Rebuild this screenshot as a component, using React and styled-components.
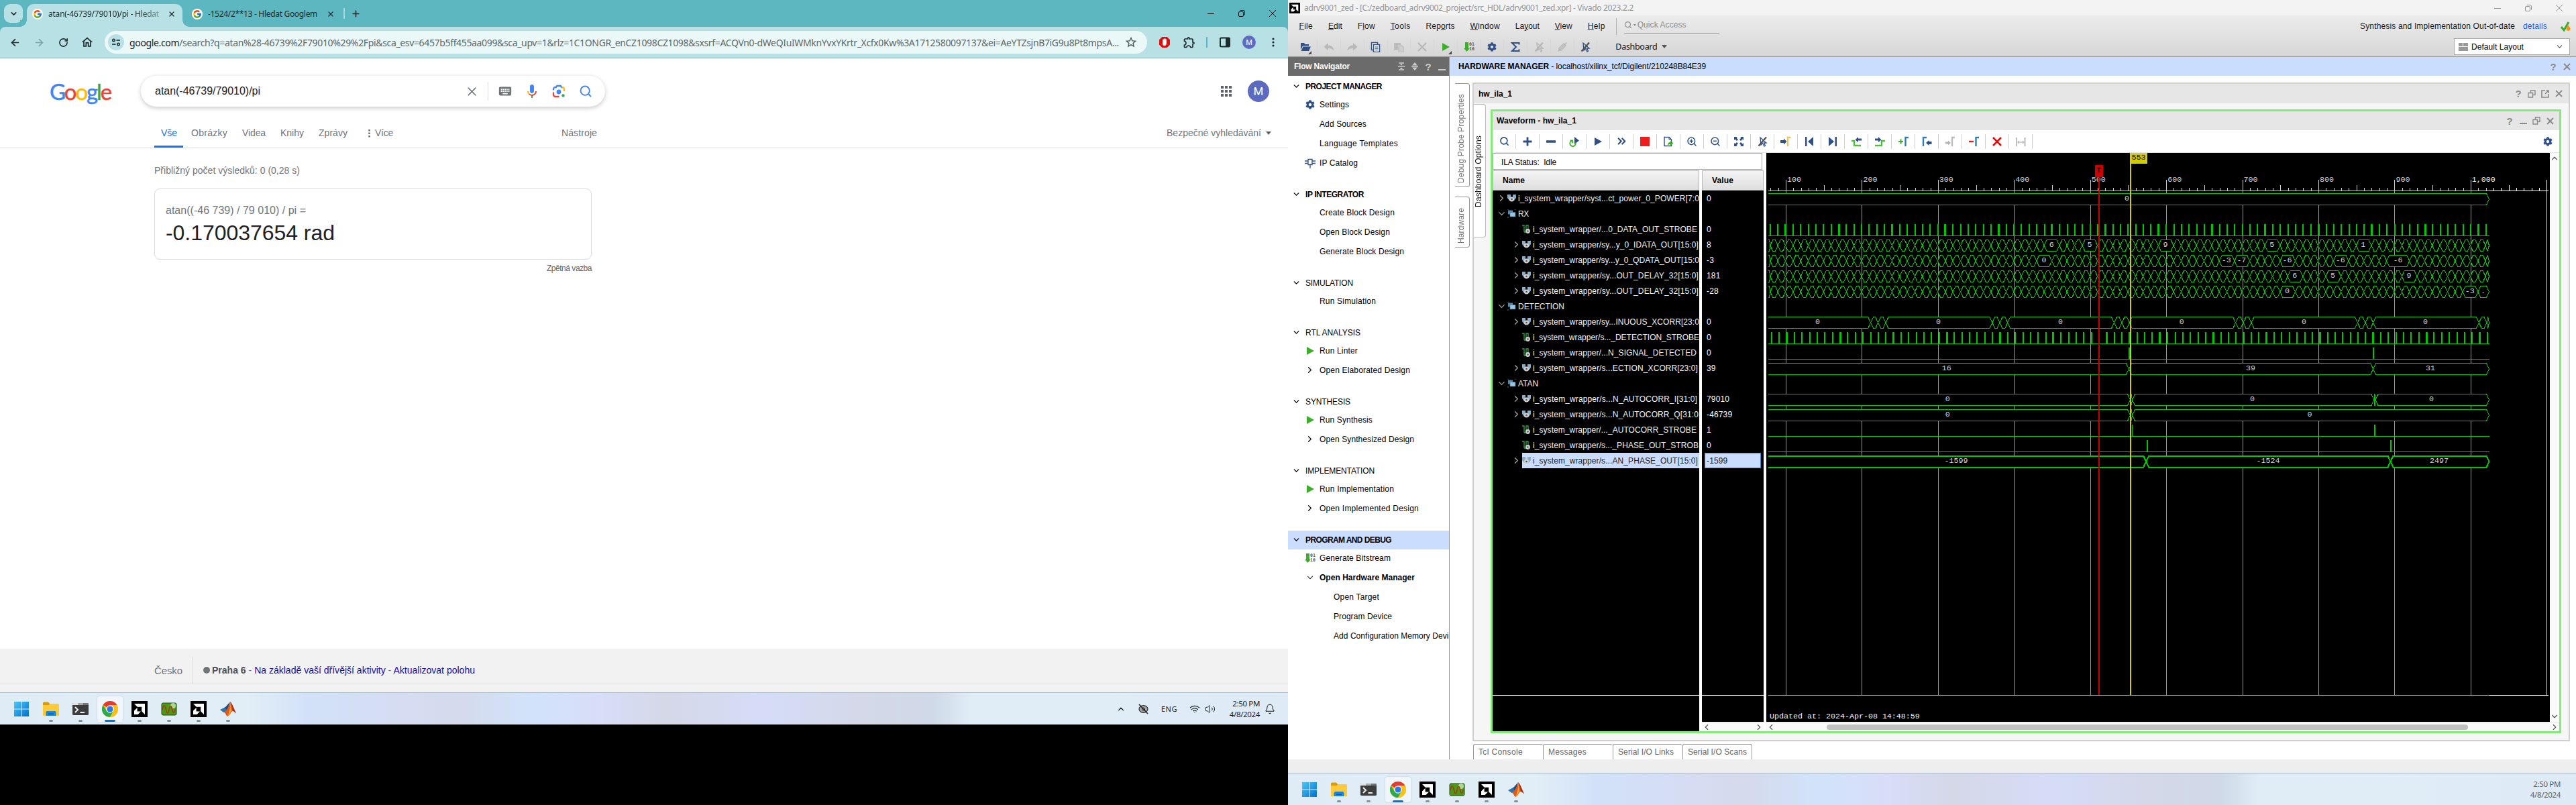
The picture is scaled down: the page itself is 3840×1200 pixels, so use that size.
import React, { useLayoutEffect, useRef, useState } from "react";
import styled, { createGlobalStyle, css } from "styled-components";
import {
  ChevronDown, ChevronUp, ChevronLeft, ChevronRight, ArrowLeft, ArrowRight, RotateCw, X, Plus,
  Search, Bell, Volume2, Wifi, ZoomIn, ZoomOut, ChevronsRight,
} from "lucide-react";
import { FcGoogle } from "react-icons/fc";
import { FaCog } from "react-icons/fa";
import { MdKeyboard, MdOutlineExtension, MdStarBorder, MdOutlineHome, MdApps } from "react-icons/md";

const Global = createGlobalStyle`
  * { box-sizing: border-box; }
  html, body { margin: 0; padding: 0; background: #000; }
  body { font-family: "Liberation Sans", Arial, sans-serif; font-size: 12px; color: #000; overflow: hidden; }
  svg { display: block; flex: none; }
`;

const ui = `"Noto Sans", "Open Sans", sans-serif`;
const arial = `"Liberation Sans", Arial, sans-serif`;
const navy = "#2f4f87";

/* ---------- text set to a given advance ---------- */

const FitText = styled.span`
  white-space: pre;
  flex: none;
  display: inline-block;
  ${(p) => p.$vertical && css`writing-mode: vertical-rl; transform: rotate(180deg);`}
`;

function Fit({ w, vertical, children, className }) {
  const ref = useRef(null);
  const [spacing, setSpacing] = useState(0);
  useLayoutEffect(() => {
    const el = ref.current;
    const box = el.getBoundingClientRect();
    const size = vertical ? box.height : box.width;
    setSpacing((w - size) / el.textContent.length);
  }, [w, vertical]);
  return (
    <FitText ref={ref} $vertical={vertical} className={className} style={{ letterSpacing: spacing }}>
      {children}
    </FitText>
  );
}

/* ---------- shared layout ---------- */

const Desktop = styled.div`
  display: grid;
  grid-template-columns: 1920px 1920px;
  width: 3840px;
  height: 1200px;
  background: #000;
  overflow: hidden;
`;
const Monitor = styled.section`
  display: flex;
  flex-direction: column;
  width: 1920px;
  height: ${(p) => p.$h}px;
  overflow: hidden;
`;
const Spacer = styled.div`flex: 1;`;
const Cell = styled.div`
  width: ${(p) => p.$w}px;
  height: 100%;
  flex: none;
  display: flex;
  align-items: center;
  justify-content: center;
  color: ${(p) => p.$c || "inherit"};
`;
const Rule = styled.div`
  width: ${(p) => p.$w || 1}px;
  height: ${(p) => p.$h}px;
  flex: none;
  background: ${(p) => p.$c};
`;

/* ---------- window controls ---------- */

const WinButtons = styled.div`
  display: flex;
  height: 100%;
  margin-left: auto;
  padding-right: ${(p) => p.$pad || 0}px;
  color: ${(p) => p.$c};
`;
function WindowControls({ pad, color }) {
  const g = { width: 10, height: 10, fill: "none", stroke: "currentColor", strokeWidth: 1 };
  return (
    <WinButtons $pad={pad} $c={color}>
      <Cell $w={46}><svg {...g}><path d="M0 5.5h10" /></svg></Cell>
      <Cell $w={46}><svg {...g}><path d="M.5 4a1.5 1.5 0 0 1 1.500-1.500H6A1.500 1.500 0 0 1 7.500 4v4A1.500 1.500 0 0 1 6 9.500H2A1.500 1.500 0 0 1 .5 8zM2.500.5H7.500a2 2 0 0 1 2 2V7.500" /></svg></Cell>
      <Cell $w={46}><svg {...g}><path d="M0 0l10 10M10 0L0 10" /></svg></Cell>
    </WinButtons>
  );
}

/* ---------- browser ---------- */

const TabStrip = styled.div`
  display: flex;
  align-items: flex-start;
  height: 40px;
  background: #5cb7c1;
  font: 12px ${ui};
  color: #1f2a2c;
`;
const TabSearch = styled.div`
  width: 28px;
  height: 28px;
  margin: 6px 6px 0;
  border-radius: 9px;
  background: #b7e1e4;
  display: flex;
  align-items: center;
  justify-content: center;
`;
const Tab = styled.div`
  position: relative;
  height: 34px;
  margin-top: 6px;
  padding: 0 8px 5px ${(p) => (p.$active ? 8 : 14)}px;
  width: ${(p) => p.$w}px;
  display: flex;
  align-items: center;
  ${(p) => p.$active && css`
    background: #b7e1e4;
    border-radius: 10px 10px 0 0;
    &::before, &::after {
      content: "";
      position: absolute;
      bottom: 0;
      width: 10px;
      height: 10px;
    }
    &::before { left: -10px; background: radial-gradient(circle at 0 0, #5cb7c1 9.5px, #b7e1e4 10px); }
    &::after { right: -10px; background: radial-gradient(circle at 100% 0, #5cb7c1 9.5px, #b7e1e4 10px); }
  `}
`;
const Favicon = styled.div`
  width: 16px;
  height: 16px;
  border-radius: 50%;
  background: #fff;
  display: flex;
  align-items: center;
  justify-content: center;
  margin-right: 8px;
  flex: none;
`;
const TabTitle = styled.div`
  width: ${(p) => p.$w}px;
  overflow: hidden;
  flex: none;
  ${(p) => p.$fade && css`mask-image: linear-gradient(90deg, #000 82%, rgba(0, 0, 0, 0.25));`}
`;
const StripEnd = styled.div`
  display: flex;
  align-items: center;
  gap: 9px;
  height: 40px;
  padding-left: 2px;
`;
const Toolbar = styled.div`
  display: flex;
  align-items: center;
  height: 47px;
  padding: 0 0 0 4px;
  background: #b7e1e4;
  border-bottom: 1px solid #8db2ba;
  color: #1f2a2c;
`;
const ToolbarBack = styled.div`
  background: #5cb7c1;
  ${Toolbar} { border-radius: 8px 8px 0 0; }
`;
const Omnibox = styled.div`
  width: 1554px;
  height: 34px;
  margin: 0 6px 0 8px;
  padding-left: 5px;
  border-radius: 17px;
  background: #ebf8f8;
  display: flex;
  align-items: center;
  font: 14px ${ui};
  color: #5c6668;
  b { font-weight: 400; color: #1b2122; }
`;
const SiteInfo = styled.div`
  width: 24px;
  height: 24px;
  border-radius: 50%;
  background: #b7e1e4;
  margin-right: 8px;
  display: flex;
  align-items: center;
  justify-content: center;
`;
const StarSlot = styled.div`margin-left: 8px; color: #46575a;`;
const Avatar = styled.div`
  width: ${(p) => p.$s}px;
  height: ${(p) => p.$s}px;
  border-radius: 50%;
  background: #5c6bc0;
  color: #fff;
  display: flex;
  align-items: center;
  justify-content: center;
  font: ${(p) => p.$f}px Roboto, sans-serif;
`;

const Page = styled.div`
  flex: 1;
  display: flex;
  flex-direction: column;
  background: #fff;
  font-family: ${arial};
`;
const SearchHeader = styled.div`
  display: flex;
  align-items: center;
  height: 72px;
  padding: 26px 28px 0 74px;
`;
const Logo = styled.div`
  width: 136px;
  font: 33px/46px Lato, sans-serif;
  span { color: #4285f4; }
  .r { color: #ea4335; }
  .y { color: #fbbc05; }
  .g { color: #34a853; }
  -webkit-text-stroke: 0.5px;
`;
const SearchBox = styled.div`
  width: 692px;
  height: 46px;
  border-radius: 23px;
  background: #fff;
  box-shadow: 0 2px 6px rgba(32, 33, 36, 0.25);
  display: flex;
  align-items: center;
  padding: 0 14px 0 21px;
  font-size: 16px;
  color: #202124;
`;
const AppsSlot = styled.div`margin: 0 20px 0 auto; color: #5f6368;`;
const ResultTabs = styled.nav`
  display: flex;
  height: 62px;
  padding: 17px 28px 0 230px;
  border-bottom: 1px solid #dadce0;
  font-size: 14px;
  color: #70757a;
`;
const ResultTab = styled.div`
  height: 44px;
  display: flex;
  align-items: center;
  gap: 7px;
  padding: ${(p) => (p.$active ? "0 9px 0 10px" : "0")};
  margin: 0 ${(p) => p.$gap}px 0 0;
  ${(p) => p.$active && css`
    color: #1a73e8;
    border-bottom: 3px solid #1a73e8;
    padding-top: 3px;
  `}
`;
const Kebab = styled.div`
  width: 3px;
  height: 13px;
  margin-left: 9px;
  background: radial-gradient(circle, #70757a 1.2px, transparent 1.6px) 0 0 / 3px 4.5px;
`;
const Triangle = styled.div`
  border: ${(p) => p.$s || 4}px solid transparent;
  border-top: ${(p) => (p.$s || 4) + 1}px solid ${(p) => p.$c || "#5f6368"};
  border-bottom: 0;
`;
const Results = styled.div`
  width: 652px;
  margin: 24px 0 0 230px;
  display: flex;
  flex-direction: column;
  color: #4d5156;
`;
const Stats = styled.div`
  font-size: 14px;
  line-height: 18px;
  color: #70757a;
`;
const Card = styled.div`
  height: 106px;
  margin-top: 18px;
  border: 1px solid #dadce0;
  border-radius: 8px;
  padding: 22px 16px 0;
`;
const Expression = styled.div`
  font-size: 16px;
  line-height: 20px;
  color: #70757a;
`;
const Answer = styled.div`
  margin-top: 5px;
  font-size: 32px;
  line-height: 36px;
  color: #202124;
`;
const Feedback = styled.div`
  align-self: flex-end;
  margin-top: 5px;
  font-size: 12px;
  line-height: 16px;
  color: #5f6368;
`;
const Footer = styled.footer`
  margin-top: auto;
  height: 65px;
  background: #f2f2f2;
  font-size: 14px;
  color: #70757a;
`;
const FooterRow = styled.div`
  display: flex;
  align-items: center;
  height: 53px;
  padding: 12px 0 0 230px;
  border-bottom: 1px solid #dadce0;
  b { color: #4d5156; }
  a { color: #1a0dab; }
`;
const Country = styled.div`
  font-size: 15px;
  width: 56px;
`;
const Dot = styled.div`
  width: 10px;
  height: 10px;
  border-radius: 50%;
  background: #70757a;
  margin: 0 3px 0 16px;
`;

function TuneIcon() {
  return (
    <svg width="14" height="14" fill="none" stroke="#1f2a2c" strokeWidth="1.6">
      <circle cx="3.500" cy="4" r="1.700" /><path d="M7.500 4H13" /><circle cx="10.500" cy="10" r="1.700" /><path d="M1 10h5.500" />
    </svg>
  );
}
function MicIcon() {
  return (
    <svg width="24" height="24" viewBox="0 0 24 24">
      <path fill="#4285f4" d="M12 15c1.660 0 3-1.310 3-2.970V4.980C15 3.310 13.660 2 12 2S9 3.310 9 4.980v7.050C9 13.690 10.340 15 12 15z" />
      <path fill="#34a853" d="M11 18.080h2V22h-2z" />
      <path fill="#fbbc04" d="M7.050 16.870C5.770 15.600 5 13.930 5 12H7c0 1.440.56 2.420 1.470 3.450z" />
      <path fill="#ea4335" d="M12 16.930a4.970 5.250 0 0 1-3.540-1.550l-1.410 1.490C8.320 18.150 10.050 18.870 12 18.870c3.870 0 6.990-2.920 6.990-6.870H17c0 2.920-2.240 4.930-5 4.930z" />
    </svg>
  );
}
function LensIcon() {
  return (
    <svg width="24" height="24" viewBox="0 0 24 24" fill="none" strokeWidth="2.300">
      <path stroke="#4285f4" d="M4 10.500V9a3 3 0 0 1 3-3h1l1.200-2h5.600L16 6h1" />
      <path stroke="#fbbc04" d="M16.500 6h.5a3 3 0 0 1 3 3v3" />
      <path stroke="#ea4335" d="M4 13.500V17a3 3 0 0 0 3 3h5.500" />
      <circle cx="12" cy="13" r="3.400" fill="#4285f4" /><circle cx="18.500" cy="18.500" r="2.200" fill="#34a853" />
    </svg>
  );
}

function Browser() {
  return (
    <>
      <TabStrip>
        <TabSearch><ChevronDown size={13} strokeWidth={3} /></TabSearch>
        <Tab $active $w={232}>
          <Favicon><FcGoogle size={14} /></Favicon>
          <TabTitle $w={168} $fade><Fit w={165}>atan(-46739/79010)/pi - Hledat</Fit></TabTitle>
          <Cell $w={32}><X size={12} strokeWidth={2.5} /></Cell>
        </Tab>
        <Tab $w={238}>
          <Favicon><FcGoogle size={14} /></Favicon>
          <TabTitle $w={172}><Fit w={163}>-1524/2**13 - Hledat Googlem</Fit></TabTitle>
          <Cell $w={22}><X size={12} strokeWidth={2.5} /></Cell>
        </Tab>
        <StripEnd><Rule $h={16} $w={2} $c="#a5d6db" /><Plus size={15} strokeWidth={2.500} /></StripEnd>
        <WindowControls color="#000" />
      </TabStrip>
      <ToolbarBack>
        <Toolbar>
          <Cell $w={36}><ArrowLeft size={17} strokeWidth={2.400} /></Cell>
          <Cell $w={36} $c="#7fa3a7"><ArrowRight size={17} strokeWidth={2.400} /></Cell>
          <Cell $w={36}><RotateCw size={15} strokeWidth={2.600} /></Cell>
          <Cell $w={36}><MdOutlineHome size={20} /></Cell>
          <Omnibox>
            <SiteInfo><TuneIcon /></SiteInfo>
            <Fit w={1475}><b>google.com</b>/search?q=atan%28-46739%2F79010%29%2Fpi&amp;sca_esv=6457b5ff455aa099&amp;sca_upv=1&amp;rlz=1C1ONGR_enCZ1098CZ1098&amp;sxsrf=ACQVn0-dWeQIuIWMknYvxYKrtr_Xcfx0Kw%3A1712580097137&amp;ei=AeYTZsjnB7iG9u8Pt8mpsA...</Fit>
            <StarSlot><MdStarBorder size={20} /></StarSlot>
          </Omnibox>
          <Cell $w={40}>
            <svg width="18" height="18"><path d="M5.300 1h7.400L17 5.300v7.400L12.700 17H5.300L1 12.700V5.300z" fill="#e40d0d" /><path d="M6 8.500V5.500a.7.7 0 0 1 1.400 0V8V4a.8.8 0 0 1 1.500 0V8V3.800a.8.8 0 0 1 1.500 0V8.500V5a.7.7 0 0 1 1.400 0v5.500c0 2-1 3.700-3 3.700-2 0-2.800-2-2.800-3z" fill="#fff" /></svg>
          </Cell>
          <Cell $w={34}><MdOutlineExtension size={20} /></Cell>
          <Cell $w={18}><Rule $w={2} $h={16} $c="#5cb7c1" /></Cell>
          <Cell $w={36}>
            <svg width="16" height="16"><rect x="1" y="1.500" width="14" height="13" rx="1.500" fill="none" stroke="#1f2a2c" strokeWidth="2" /><path d="M9 1h6v14H9z" fill="#1f2a2c" /></svg>
          </Cell>
          <Cell $w={36}><Avatar $s={20} $f={11}>M</Avatar></Cell>
          <Cell $w={36}><svg width="4" height="16" fill="#1f2a2c"><circle cx="2" cy="3" r="1.600" /><circle cx="2" cy="8" r="1.600" /><circle cx="2" cy="13" r="1.600" /></svg></Cell>
        </Toolbar>
      </ToolbarBack>
      <Page>
        <SearchHeader>
          <Logo><Fit w={91}><span>G</span><span className="r">o</span><span className="y">o</span><span>g</span><span className="g">l</span><span className="r">e</span></Fit></Logo>
          <SearchBox>
            <Fit w={157}>atan(-46739/79010)/pi</Fit>
            <Spacer />
            <Cell $w={48} $c="#70757a"><X size={21} strokeWidth={2} /></Cell>
            <Rule $h={28} $c="#dadce0" />
            <Cell $w={49} $c="#70757a"><MdKeyboard size={22} /></Cell>
            <Cell $w={32}><MicIcon /></Cell>
            <Cell $w={48}><LensIcon /></Cell>
            <Cell $w={31} $c="#4285f4"><Search size={20} strokeWidth={2.300} /></Cell>
          </SearchBox>
          <AppsSlot><MdApps size={24} /></AppsSlot>
          <Avatar $s={32} $f={17}>M</Avatar>
        </SearchHeader>
        <ResultTabs>
          <ResultTab $active $gap={12}><Fit w={24}>Vše</Fit></ResultTab>
          <ResultTab $gap={22}><Fit w={54}>Obrázky</Fit></ResultTab>
          <ResultTab $gap={22}><Fit w={35}>Videa</Fit></ResultTab>
          <ResultTab $gap={22}><Fit w={35}>Knihy</Fit></ResultTab>
          <ResultTab $gap={22}><Fit w={43}>Zprávy</Fit></ResultTab>
          <ResultTab $gap={251}><Kebab /><Fit w={27}>Více</Fit></ResultTab>
          <ResultTab $gap={0}><Fit w={53}>Nástroje</Fit></ResultTab>
          <Spacer />
          <ResultTab $gap={-3}><Fit w={141}>Bezpečné vyhledávání</Fit><Triangle $s={4.5} /></ResultTab>
        </ResultTabs>
        <Results>
          <Stats><Fit w={217}>Přibližný počet výsledků: 0 (0,28 s)</Fit></Stats>
          <Card>
            <Expression><Fit w={209}>atan((-46 739) / 79 010) / pi =</Fit></Expression>
            <Answer><Fit w={252}>-0.170037654 rad</Fit></Answer>
          </Card>
          <Feedback><Fit w={67}>Zpětná vazba</Fit></Feedback>
        </Results>
        <Footer>
          <FooterRow>
            <Country><Fit w={42}>Česko</Fit></Country>
            <Rule $h={40} $c="#dadce0" />
            <Dot />
            <Fit w={392}><b>Praha 6</b> - <a>Na základě vaší dřívější aktivity</a> - <a>Aktualizovat polohu</a></Fit>
          </FooterRow>
        </Footer>
      </Page>
    </>
  );
}

/* ---------- taskbar ---------- */

const Bar = styled.div`
  display: flex;
  align-items: center;
  height: 48px;
  flex: none;
  padding: 0 20px 0 10px;
  border-top: 1px solid #adb8c6;
  background: linear-gradient(90deg, #e0ecf5 0, #e1eef6 370px, #d2e1f9 460px, #d6dcf1 620px, #d5daec 690px, #d1e3fb 785px, #d8ddf8 896px, #d5d8e7 990px, #d5dcf8 1135px, #d4d8e8 1290px, #cfd9e8 1392px, #e1edf6 1450px, #deebf6 1920px);
  font: 12px ${ui};
  color: ${(p) => p.$c};
`;
const TaskCell = styled.div`
  position: relative;
  width: 38px;
  height: 38px;
  margin: 0 3px;
  border-radius: 4px;
  display: flex;
  align-items: center;
  justify-content: center;
  ${(p) => p.$active && css`background: #f1f6fc; box-shadow: 0 0 1px 1px rgba(170, 190, 215, 0.3);`}
  &::after {
    content: "";
    position: absolute;
    left: calc(50% - ${(p) => (p.$active ? 8 : 3)}px);
    bottom: 0;
    width: ${(p) => (p.$active ? 16 : 6)}px;
    height: 3px;
    border-radius: 2px;
    background: ${(p) => (p.$active ? "#0078d4" : p.$idle ? "transparent" : "#868e96")};
  }
`;
const Clock = styled.div`
  width: ${(p) => p.$w}px;
  text-align: right;
  line-height: 16px;
  white-space: nowrap;
  font-size: 11.500px;
  letter-spacing: -0.350px;
`;
const TrayItem = styled.div`
  margin-right: ${(p) => p.$mr}px;
  font-size: 11px;
`;
const BellSlot = styled.div`margin-left: 7px;`;
const ClockPad = styled.div`width: 3px;`;

const AmdLogo = ({ s }) => (
  <svg width={s} height={s} viewBox="0 0 24 24">
    <path fill="#000" d="M0 0h24v24H0z" />
    <path fill="#fff" d="M4 4h16v16l-4.800-4.800V8.800H8.800zM8.600 10v5.400H14L9.500 20H4v-5.400z" />
  </svg>
);
const taskIcons = [
  <svg width="24" height="24"><defs><linearGradient id="wn" x1="0" y1="0" x2="1" y2="1"><stop offset="0" stopColor="#4cc8f4" /><stop offset="1" stopColor="#0070d0" /></linearGradient></defs><path fill="url(#wn)" d="M1 1h10.500v10.500H1zM12.500 1H23v10.500H12.500zM1 12.500h10.500V23H1zM12.500 12.500H23V23H12.500z" /></svg>,
  <svg width="24" height="24"><path d="M0 3a1.500 1.500 0 0 1 1.500-1.500H8l2 2.500v4H0z" fill="#dd9b07" /><path d="M0 6h9l1.500-2H22.500A1.500 1.500 0 0 1 24 5.500V22H0z" fill="#fdcb3a" /><path d="M4.500 22v-5a2 2 0 0 1 2-2h11a2 2 0 0 1 2 2v5z" fill="#1a86dc" /><path d="M8 18.500h8V20H8z" fill="#0b5aa8" /></svg>,
  <svg width="24" height="24"><rect y="3" width="24" height="18" rx="1.500" fill="#3c3c3c" /><path d="M0 6V4.500A1.500 1.500 0 0 1 1.500 3H8v3z" fill="#e2e2e2" /><path d="M8 3h8v3H8z" fill="#a8a8a8" /><path d="M16 3h6.500A1.500 1.500 0 0 1 24 4.500V6h-8z" fill="#777" /><path d="M4 9l4 4-4 4M11.500 17H18" stroke="#f0f0f0" strokeWidth="2" fill="none" /></svg>,
  <svg width="24" height="24" viewBox="0 0 24 24"><circle cx="12" cy="12" r="12" fill="#fbc116" /><path d="M12 12L1.600 6A12 12 0 0 1 22.400 6H12z" fill="#e33b2e" /><path d="M1.600 6A12 12 0 0 0 12 24l5.200-9L12 12 6.800 15z" fill="#2da94f" /><path d="M12 6h10.400A12 12 0 0 1 12 24l5.200-9z" fill="#fbc116" /><circle cx="12" cy="12" r="5.800" fill="#fff" /><circle cx="12" cy="12" r="4.600" fill="#2a78e8" /></svg>,
  <AmdLogo s={24} />,
  <svg width="24" height="24"><rect x="1" y="3" width="22" height="18" rx="2" fill="#4b9a12" stroke="#1c4a1c" /><circle cx="18" cy="7" r="4" fill="#d8efc8" opacity=".7" /><path d="M2 13c2-9 4-7 5.500 0s3 6 4.500 0 3-8 4.500-1 3 7 5 0" fill="none" stroke="#a03a1c" strokeWidth="1.500" /></svg>,
  <AmdLogo s={24} />,
  <svg width="26" height="24" viewBox="0 0 26 24"><path d="M1 13l7-3.500 3 5L6.500 17z" fill="#2c73ad" /><path d="M8 9.500C11 8 13 4 16 1l-4.500 15z" fill="#1f4d7c" /><path d="M16.500 1C15 6 13 12 6.500 17c3 .5 3.500 5 5.500 6 5-2 5-8 8-8 2 0 3 2 5 3.500C22 12 19.500 5 16.500 1z" fill="#dd5a1c" /><path d="M16.500 1c0 7-1 14-4.500 22 3.500-2 5-8 6-8z" fill="#f6a12e" /><path d="M16.500 1c2 6 2.500 10 3.500 14 2 0 3 2 5 3.500C22 12 19.500 5 16.500 1z" fill="#a82f1a" /></svg>,
];

function Taskbar({ tray }) {
  return (
    <Bar $c={tray ? "#1c1c1c" : "#5b6168"}>
      {taskIcons.map((icon, i) => <TaskCell key={i} $active={i === 3} $idle={i === 0}>{icon}</TaskCell>)}
      <Spacer />
      {tray && (
        <>
          <TrayItem $mr={18}><ChevronUp size={14} /></TrayItem>
          <TrayItem $mr={18}>
            <svg width="17" height="16" fill="none" stroke="#2b2b2b" strokeWidth="1.200"><ellipse cx="8.500" cy="8" rx="6.500" ry="5.300" fill="#a6a6a6" /><circle cx="8.500" cy="8" r="2" fill="#f0f0f0" /><path d="M2 1l13 14" strokeWidth="1.800" /></svg>
          </TrayItem>
          <TrayItem $mr={18}><Fit w={24}>ENG</Fit></TrayItem>
          <TrayItem $mr={7}><Wifi size={16} strokeWidth={1.800} /></TrayItem>
          <TrayItem $mr={6}><Volume2 size={16} strokeWidth={1.500} /></TrayItem>
        </>
      )}
      <Clock $w={60}>2:50 PM<br />4/8/2024</Clock>
      {tray && <TrayItem $mr={-1}><BellSlot><Bell size={16} strokeWidth={1.600} /></BellSlot></TrayItem>}
      {!tray && <ClockPad />}
    </Bar>
  );
}

/* ---------- IDE header ---------- */

const TitleBar = styled.div`
  display: flex;
  align-items: center;
  gap: 6px;
  height: 23px;
  padding-left: 2px;
  background: #f3f3f3;
  font: 12px ${ui};
  color: #939393;
  flex: none;
`;
const IdeTop = styled.div`
  height: 62px;
  flex: none;
  background: linear-gradient(#ececec, #d6d6d6);
  border-bottom: 1px solid #999;
`;
const MenuRow = styled.div`
  display: flex;
  align-items: center;
  height: 32px;
  padding: 0 8px 0 16.5px;
  color: #1b1b1b;
`;
const MenuItem = styled.div`margin-right: ${(p) => p.$gap}px;`;
const QuickAccess = styled.div`
  display: flex;
  align-items: center;
  gap: 2px;
  width: 142px;
  height: 24px;
  margin: -3px 0 0 11px;
  border-bottom: 1px solid #999;
  color: #8e8e8e;
  align-self: center;
`;
const Details = styled.span`color: #1a5fff; margin: 0 20px 0 12px;`;
const ToolRow = styled.div`
  display: flex;
  align-items: center;
  height: 29px;
  padding-left: 9.600px;
`;
const ToolCell = styled.div`
  position: relative;
  width: ${(p) => p.$w}px;
  height: 22px;
  flex: none;
  display: flex;
  align-items: center;
  justify-content: center;
  border-right: 1px solid ${(p) => p.$line};
  color: ${navy};
  ${(p) => p.$corner && css`
    &::after {
      content: "";
      position: absolute;
      right: 8px;
      bottom: 0;
      border-left: 5px solid transparent;
      border-bottom: 5px solid #444;
    }
  `}
`;
const DashMenu = styled.div`
  display: flex;
  align-items: center;
  gap: 7px;
  margin-left: 27px;
  font: 12.500px ${ui};
  color: #111;
`;
const LayoutSelect = styled.div`
  display: flex;
  align-items: center;
  width: 173px;
  height: 25px;
  margin: 0 9px 0 auto;
  padding: 0 8px 0 6px;
  background: #fff;
  border: 1px solid #aaa;
  gap: 5px;
`;

const s16 = { width: 16, height: 16, viewBox: "0 0 16 16" };
const PlayIcon = ({ c = "#3dae2b", s = 14 }) => <svg width={s} height={s} viewBox="0 0 14 14"><path d="M2 1l11 6-11 6z" fill={c} /></svg>;
const BitsText = styled.text`font: bold 6.500px "DejaVu Sans Mono", monospace; fill: #555;`;
const BitIcon = () => (
  <svg width="16" height="16"><path d="M2 1h5v9h2l-4.500 5L0 10h2z" fill="#3dae2b" /><BitsText x="8" y="6">01</BitsText><BitsText x="8" y="12.500">10</BitsText></svg>
);
const NoCursor = ({ c = navy, d = "#4a4a4a" }) => (
  <svg {...s16} fill="none"><path d="M5 2l1 11 2.500-2.500L11 15l1.500-1-2-4H14z" stroke={c} strokeWidth="1.300" /><path d="M2.500 14.500L14 1.500" stroke={d} strokeWidth="2.200" /></svg>
);
const Undo = ({ flip }) => <svg width="16" height="16" viewBox="0 0 16 16" fill="#b9b9b9"><path transform={flip ? "translate(16 0) scale(-1 1)" : undefined} d="M7 2v3.500c5 0 8 3 8.500 8C13.500 11 11 10 7 10v3.500L.5 7.700z" /></svg>;
const mainTools = [
  <svg {...s16} fill={navy}><path d="M1 2h5l1.500 2H13v2.500H4L1 12z" /><path d="M4.500 7.500H16L13 14H1.500z" /></svg>,
  <Undo />,
  <Undo flip />,
  <svg {...s16}><path d="M1.500 1.500h9v11h-9z" fill="#fff" stroke={navy} strokeWidth="1.500" /><path d="M4.500 4.500h9v11h-9z" fill="#fff" stroke={navy} strokeWidth="1.500" /><path d="M6.500 8h5M6.500 10.300h5M6.500 12.600h5" stroke={navy} /></svg>,
  <svg {...s16} fill="#bcbcbc"><path d="M1 2h10v3H7v8H1z" /><path d="M8 6h5l2 2v8H8z" fill="#cfcfcf" stroke="#b3b3b3" /></svg>,
  <svg {...s16} stroke="#b5b5b5" strokeWidth="2"><path d="M2 2l12 12M14 2L2 14" /></svg>,
  <PlayIcon />,
  <BitIcon />,
  <FaCog size={14} />,
  <svg {...s16} fill="none" stroke={navy} strokeWidth="2"><path d="M13.500 4.500V2H3l6 6-6 6h10.500v-2.500" /></svg>,
  <NoCursor c="#b5b5b5" d="#b5b5b5" />,
  <svg {...s16} fill="none" stroke="#b5b5b5" strokeWidth="1.400"><path d="M3 10l7-7 3 3-7 7H3zM6 10l5-5M1.500 14.500l13-13" /></svg>,
  <NoCursor />,
];
const menus = [["", "F", "ile", 20.5], ["", "E", "dit", 21], ["F", "l", "ow", 26], ["", "T", "ools", 30], ["Rep", "o", "rts", 43], ["", "W", "indow", 44.5], ["La", "y", "out", 36], ["", "V", "iew", 26], ["", "H", "elp", 26]];

function IdeHeader() {
  return (
    <>
      <TitleBar>
        <AmdLogo s={16} />
        <Fit w={491}>adrv9001_zed - [C:/zedboard_adrv9002_project/src_HDL/adrv9001_zed.xpr] - Vivado 2023.2.2</Fit>
        <WindowControls pad={2} color="#8f8f8f" />
      </TitleBar>
      <IdeTop>
        <MenuRow>
          {menus.map(([a, u, b, w], i) => (
            <MenuItem key={u} $gap={i === 8 ? 16 : 22.900}><Fit w={w}>{a}<u>{u}</u>{b}</Fit></MenuItem>
          ))}
          <Rule $h={25} $c="#b5b5b5" />
          <QuickAccess>
            <Search size={12} strokeWidth={2.500} /><Triangle $s={2} $c="#8e8e8e" /><Fit w={73}>Quick Access</Fit>
          </QuickAccess>
          <Spacer />
          <Fit w={231}>Synthesis and Implementation Out-of-date</Fit>
          <Details><Fit w={36}>details</Fit></Details>
          <svg width="15" height="15"><path d="M1 8l4 5L12 1" fill="none" stroke="#3dae2b" strokeWidth="3" /><path d="M11.500 5.500c2 2.500 3 4 3 5.500a3 3 0 0 1-6 0c0-1.500 1-3 3-5.500z" fill="#f7941d" /></svg>
        </MenuRow>
        <ToolRow>
          {mainTools.map((icon, i) => <ToolCell key={i} $w={34.75} $line="#d6d6d6" $corner={i === 0 || i === 6}>{icon}</ToolCell>)}
          <DashMenu><Fit w={62}>Dashboard</Fit><Triangle $s={4} $c="#555" /></DashMenu>
          <LayoutSelect>
            <svg width="14" height="12" fill="#9a9a9a"><path d="M0 0h6v5H0zM7 0h7v5H7zM0 6h14v6H0z" /></svg>
            <Fit w={78}>Default Layout</Fit>
            <Spacer />
            <ChevronDown size={13} color="#555" />
          </LayoutSelect>
        </ToolRow>
      </IdeTop>
    </>
  );
}

/* ---------- flow navigator ---------- */

const IdeBody = styled.div`
  display: flex;
  height: 1047px;
  flex: none;
  background: #fff;
`;
const Nav = styled.aside`
  width: 241px;
  flex: none;
  border-right: 1px solid #999;
  overflow: hidden;
`;
const NavHeader = styled.div`
  display: flex;
  align-items: center;
  height: 28px;
  padding: 0 1px 0 9px;
  margin-bottom: 1.500px;
  background: #6b6b6b;
  color: #fff;
  font-weight: 700;
`;
const NavSection = styled.div`margin-bottom: 18.500px;`;
const NavTitle = styled.div`
  display: flex;
  align-items: center;
  height: 28px;
  padding-left: 5px;
  margin-bottom: -1.500px;
  gap: 7px;
  font-weight: ${(p) => (p.$bold ? 700 : 400)};
  background: ${(p) => (p.$on ? "#cbddff" : "transparent")};
`;
const NavItem = styled.div`
  display: flex;
  align-items: center;
  height: 29px;
  padding-left: ${(p) => (p.$deep ? 45 : 24)}px;
  font-weight: ${(p) => (p.$bold ? 700 : 400)};
  white-space: nowrap;
`;
const NavIcon = styled.div`
  width: 17px;
  flex: none;
  margin-right: 6px;
  display: flex;
  justify-content: center;
`;

const ChipIcon = () => <svg {...s16} fill="none" stroke={navy} strokeWidth="1.300"><path d="M5 2.500h6v8H5zM8 10.500V16M0 5h5M0 8.500h5M11 5h5M11 8.500h5" /></svg>;
const gear = <FaCog size={14} color={navy} />;
const play = <PlayIcon />;
const right = <ChevronRight size={15} color="#111" strokeWidth={2} />;
const nav = [
  { t: "PROJECT MANAGER", w: 114, bold: true, items: [["Settings", 44, gear], ["Add Sources", 70], ["Language Templates", 117], ["IP Catalog", 57, <ChipIcon />]] },
  { t: "IP INTEGRATOR", w: 87, bold: true, items: [["Create Block Design", 112], ["Open Block Design", 105], ["Generate Block Design", 126]] },
  { t: "SIMULATION", w: 71, items: [["Run Simulation", 84]] },
  { t: "RTL ANALYSIS", w: 82, items: [["Run Linter", 57, play], ["Open Elaborated Design", 135, right]] },
  { t: "SYNTHESIS", w: 67, items: [["Run Synthesis", 79, play], ["Open Synthesized Design", 141, right]] },
  { t: "IMPLEMENTATION", w: 103, items: [["Run Implementation", 111, play], ["Open Implemented Design", 148, right]] },
  { t: "PROGRAM AND DEBUG", w: 128, bold: true, on: true, items: [["Generate Bitstream", 106, <BitIcon />], ["Open Hardware Manager", 142, <ChevronDown size={14} strokeWidth={1.800} />, true], ["Open Target", 68, null, false, true], ["Program Device", 87, null, false, true], ["Add Configuration Memory Devi", 171.5, null, false, true]] },
];

function Navigator() {
  return (
    <Nav>
      <NavHeader>
        <Fit w={83}>Flow Navigator</Fit>
        <Spacer />
        <Cell $w={20} $c="#ccc"><svg width="10" height="12" stroke="currentColor" strokeWidth="1.400" fill="currentColor"><path d="M0 6h10M1 1h8M1 11h8" /><path d="M3 2h4L5 4.500zM3 10h4L5 7.500z" strokeWidth="0" /></svg></Cell>
        <Cell $w={20} $c="#ccc"><svg width="10" height="12" fill="currentColor"><path d="M1 4.500L5 0l4 4.500zM1 7.500L5 12l4-4.500zM0 5.300h10v1.400H0z" /></svg></Cell>
        <Cell $w={20} $c="#ccc"><Q>?</Q></Cell>
        <Cell $w={20} $c="#ccc"><svg width="11" height="12"><path d="M0 10h11v2H0z" fill="currentColor" /></svg></Cell>
      </NavHeader>
      {nav.map((s) => (
        <NavSection key={s.t}>
          <NavTitle $bold={s.bold} $on={s.on}><Cell $w={14}><ChevronDown size={13} strokeWidth={2.600} /></Cell><Fit w={s.w}>{s.t}</Fit></NavTitle>
          {s.items.map(([t, w, icon, bold, deep]) => (
            <NavItem key={t} $bold={bold} $deep={deep}><NavIcon>{icon}</NavIcon><Fit w={w}>{t}</Fit></NavItem>
          ))}
        </NavSection>
      ))}
    </Nav>
  );
}

/* ---------- hardware manager ---------- */

const Q = styled.span`font: bold 15px ${arial};`;
const Content = styled.main`
  flex: 1;
  display: flex;
  flex-direction: column;
  background: #fff;
`;
const ManagerHeader = styled.div`
  display: flex;
  align-items: center;
  height: 28px;
  padding: 0 4px 0 13px;
  background: #cbddff;
  flex: none;
`;
const Workspace = styled.div`
  display: flex;
  height: 982px;
  margin-top: 10px;
`;
const SideTabs = styled.div`
  width: 34px;
  padding: 1px 0 0 8px;
  display: flex;
  flex-direction: column;
  gap: 14px;
`;
const SideTab = styled.div`
  width: ${(p) => p.$w}px;
  height: ${(p) => p.$h}px;
  display: flex;
  align-items: flex-end;
  justify-content: center;
  padding: 0 3px ${(p) => p.$pb}px 0;
  border: 1px solid ${(p) => p.$line || "#999"};
  border-left: 0;
  border-radius: 0 4px 4px 0;
  background: #fff;
  color: ${(p) => p.$c};
  flex: none;
`;
const Frame = styled.div`
  width: 1636px;
  height: 982px;
  border: 2px solid #cfcfcf;
  background: #f6f6f6;
  flex: none;
`;
const PanelHeader = styled.div`
  display: flex;
  align-items: center;
  height: ${(p) => p.$h}px;
  padding: 0 ${(p) => p.$pr}px 0 ${(p) => p.$pl}px;
  background: #e6e6e6;
  font-weight: 700;
`;
const FrameBody = styled.div`
  display: flex;
  align-items: flex-start;
  padding-top: 1px;
`;
const Wave = styled.div`
  width: 1596px;
  height: 930px;
  margin: 8px 0 0 7px;
  border: 3px solid #83ec79;
  background: #fff;
`;
const WaveTools = styled.div`
  display: flex;
  align-items: center;
  height: 34px;
  border-bottom: 1px solid #e2e2e2;
  padding-right: 10px;
`;
const WaveBody = styled.div`display: flex; height: 862px;`;
const SignalPane = styled.div`width: 408px; flex: none;`;
const Status = styled.div`
  width: 402px;
  height: 25px;
  margin-bottom: 1px;
  padding: 2px 0 0 12px;
  display: flex;
  align-items: center;
  border: 1px solid #aaa;
`;
const Columns = styled.div`display: flex; gap: 4px; height: 836px;`;
const Column = styled.div`
  width: ${(p) => p.$w}px;
  display: flex;
  flex-direction: column;
  background: #000;
  color: #fff;
  overflow: hidden;
`;
const ColumnHead = styled.div`
  height: 30px;
  flex: none;
  padding-left: 14px;
  display: flex;
  align-items: center;
  background: linear-gradient(#f4f4f4, #dedede);
  border: 1px solid #b5b5b5;
  color: #000;
  font-weight: 700;
`;
const Rows = styled.div`
  height: 753px;
  flex: none;
  border-bottom: 1px solid #fff;
`;
const SignalRow = styled.div`
  display: flex;
  height: 23px;
  padding-left: ${(p) => 6 + p.$level * 22}px;
`;
const Expander = styled.div`
  width: 16px;
  flex: none;
  display: flex;
  align-items: center;
  color: #a5a5a5;
`;
const SignalLabel = styled.div`
  flex: 1;
  display: flex;
  align-items: center;
  gap: 3px;
  overflow: hidden;
  background: ${(p) => (p.$on ? "#cbddff" : "transparent")};
  color: ${(p) => (p.$on ? "#222" : "#f2f2f2")};
`;
const ValueRow = styled.div`
  height: 23px;
  display: flex;
  align-items: center;
  margin: 0 4px;
  padding-left: 3px;
  letter-spacing: 0.150px;
  ${(p) => p.$on && css`
    padding-left: 2px;
    background: #cbddff;
    color: #222;
    border: 1px solid #3a8ccc;
  `}
`;
const HScroll = styled.div`
  height: 14px;
  margin-top: auto;
  display: flex;
  align-items: center;
  justify-content: space-between;
  background: #fafafa;
  border-top: 1px solid #e5e5e5;
  color: #555;
`;
const Thumb = styled.div`
  width: 956px;
  height: 8px;
  border-radius: 4px;
  background: #c1c1c1;
  margin: 0 auto 0 76px;
`;
const ScopePane = styled.div`flex: 1; display: flex; flex-direction: column;`;
const ScopeRow = styled.div`display: flex; height: 848px;`;
const VScroll = styled.div`
  width: 14px;
  display: flex;
  flex-direction: column;
  justify-content: space-between;
  align-items: center;
  padding: 1px 0;
  background: #fafafa;
  color: #555;
`;
const BottomTabs = styled.div`display: flex; margin: 4px 0 0 35px; height: 23px;`;
const BottomTab = styled.div`
  width: 104px;
  height: 23px;
  padding-left: 7px;
  display: flex;
  align-items: center;
  border: 1px solid #999;
  border-bottom: 0;
  border-right-width: ${(p) => (p.$last ? 1 : 0)}px;
  border-radius: 3px 3px 0 0;
  color: #666;
`;
const StatusStrip = styled.div`flex: 1; background: #eeeeee;`;

const P = ({ children, ...r }) => <svg {...s16} fill="none" {...r}>{children}</svg>;
const navyRight = <path d="M0 6h5V3.500l4.500 4.500L5 12.500V10H0z" fill={navy} />;
const waveTools = [
  <Search size={15} strokeWidth={2.500} />,
  <P stroke={navy} strokeWidth="2.800"><path d="M8 1.500v13M1.500 8h13" /></P>,
  <P stroke={navy} strokeWidth="3.500"><path d="M1 8h14" /></P>,
  <P><path d="M8 1l7 5.500L8 12z" fill={navy} /><path d="M9.500 9.500A4.200 4.200 0 1 1 4 7M1.500 6.500H5v4" stroke="#3dae2b" strokeWidth="1.800" /></P>,
  <PlayIcon c={navy} />,
  <ChevronsRight size={19} strokeWidth={2.800} />,
  <P><path d="M1 1h14v14H1z" fill="#ee1c1c" /></P>,
  <P><path d="M2 1.500h7l3.500 3.500v9.500H2z" stroke={navy} strokeWidth="1.400" /><path d="M9 1.500V5h3.500" stroke={navy} /><path d="M7 14c0-4 2-5 4-5V7l4.500 3.500L11 14v-2c-2 0-3 .5-4 2z" fill="#3dae2b" /></P>,
  <ZoomIn size={16} strokeWidth={2.200} />,
  <ZoomOut size={16} strokeWidth={2.200} />,
  <P fill={navy}><path d="M1 1h5L4.500 2.500 7 5 5 7 2.500 4.500 1 6zM15 1v5l-1.500-1.500L11 7 9 5l2.500-2.500L10 1zM1 15v-5l1.500 1.500L5 9l2 2-2.500 2.500L6 15zM15 15h-5l1.500-1.500L9 11l2-2 2.500 2.500L15 10z" /></P>,
  <NoCursor />,
  <P>{navyRight}<path d="M15.500 2H11v13" stroke="#e3c763" strokeWidth="2.400" /></P>,
  <P fill={navy}><path d="M2 1h2.500v14H2zM14 1v14L6 8z" /></P>,
  <P fill={navy}><path d="M11.500 1H14v14h-2.500zM2 1v14l8-7z" /></P>,
  <P><path d="M1 7h4v7h10" stroke="#4cbf3c" strokeWidth="2.400" /><path d="M16 3.500h-5V1L6.500 5.500 11 9V6.500h5z" fill={navy} /></P>,
  <P><path d="M1 14h10V7h5" stroke="#4cbf3c" strokeWidth="2.400" /><path d="M1 3.500h5V1l4.500 4.500L6 9V6.500H1z" fill={navy} /></P>,
  <P><path d="M1 8h7M4.500 4.500v7" stroke="#3dae2b" strokeWidth="2" /><path d="M16 2h-4.500v13" stroke="#2f7fb5" strokeWidth="2.400" /></P>,
  <P><path d="M8 2H3v13" stroke="#2f7fb5" strokeWidth="2.400" /><path d="M15.500 8h-4V6L7 10l4.500 4v-2h4z" fill={navy} /></P>,
  <P><path d="M1 8.500h4v-2l4 3.500-4 3.500v-2H1z" fill="#b5b5b5" /><path d="M15 2h-4v13" stroke="#bdbdbd" strokeWidth="2.400" /></P>,
  <P><path d="M1 8h7" stroke="#ee1c1c" strokeWidth="2.400" /><path d="M16 2h-4.500v13" stroke="#2f7fb5" strokeWidth="2.400" /></P>,
  <P stroke="#e80c0c" strokeWidth="2.600"><path d="M2 2l12 12M14 2L2 14" /></P>,
  <P stroke="#bdbdbd" strokeWidth="1.400"><path d="M2 2v13M14.500 2v13" strokeWidth="2" /><path d="M4 9h9M6 7L4 9l2 2M11 7l2 2-2 2" /></P>,
];

const headColor = "#8a8a8a";
const icons = {
  q: <Q>?</Q>,
  min: <svg width="11" height="12"><path d="M0 9h11v2H0z" fill="currentColor" /></svg>,
  rest: <svg width="12" height="12" fill="none" stroke="currentColor" strokeWidth="1.400"><path d="M1 4.500h6.500V11H1zM4.500 4.500V1H11v6.500H7.500" /></svg>,
  out: <svg width="12" height="12" fill="none" stroke="currentColor" strokeWidth="1.600"><path d="M6 1H1v10h10V6M6 6l4-4M7.500 1H11v4" /></svg>,
  x: <svg width="11" height="11" fill="none" stroke="currentColor" strokeWidth="1.900"><path d="M1 1l9 9M10 1l-9 9" /></svg>,
};
const HeadButtons = ({ list }) => list.map((k) => <Cell key={k} $w={20} $c={headColor}>{icons[k]}</Cell>);

const BusIcon = () => <svg width="13" height="12"><path d="M0 0h5v4l1.500 1L8 4V0h5v5l-3 4H3L0 5z" fill="#86aecb" /><circle cx="6.500" cy="7" r="3.600" fill="#d0d0d0" /><circle cx="6.500" cy="7" r="1.300" fill="#555" /></svg>;
const WireIcon = () => <svg width="13" height="14"><path d="M0 1h3v10M6 11V1h3v8M3 11h3" fill="none" stroke="#2f9e4a" strokeWidth="1.300" /><circle cx="8.500" cy="9.500" r="3.400" fill="#d0d0d0" /><circle cx="8.500" cy="9.500" r="1.200" fill="#555" /></svg>;
const GroupIcon = () => <svg width="13" height="13"><path d="M1 1.500h7v6H1z" fill="#5b87a8" /><path d="M4 4.500h8V11H4z" fill="#9cc6e0" stroke="#41657f" strokeWidth=".6" /><path d="M0 0h2M11 0h2M0 12h2" stroke="#777" /></svg>;

const signals = [
  ["bus", 0, "i_system_wrapper/syst...ct_power_0_POWER[7:0", 270, "0"],
  ["group", 0, "RX", 16, ""],
  ["wire", 1, "i_system_wrapper/...0_DATA_OUT_STROBE", 245, "0"],
  ["bus", 1, "i_system_wrapper/sy...y_0_IDATA_OUT[15:0]", 247, "8"],
  ["bus", 1, "i_system_wrapper/sy...y_0_QDATA_OUT[15:0", 248, "-3"],
  ["bus", 1, "i_system_wrapper/sy...OUT_DELAY_32[15:0]", 247, "181"],
  ["bus", 1, "i_system_wrapper/sy...OUT_DELAY_32[15:0]", 247, "-28"],
  ["group", 0, "DETECTION", 69, ""],
  ["bus", 1, "i_system_wrapper/sy...INUOUS_XCORR[23:0", 248, "0"],
  ["wire", 1, "i_system_wrapper/s..._DETECTION_STROBE", 248, "0"],
  ["wire", 1, "i_system_wrapper/...N_SIGNAL_DETECTED", 244, "0"],
  ["bus", 1, "i_system_wrapper/s...ECTION_XCORR[23:0]", 246, "39"],
  ["group", 0, "ATAN", 30, ""],
  ["bus", 1, "i_system_wrapper/s...N_AUTOCORR_I[31:0]", 245, "79010"],
  ["bus", 1, "i_system_wrapper/s...N_AUTOCORR_Q[31:0", 247, "-46739"],
  ["wire", 1, "i_system_wrapper/..._AUTOCORR_STROBE", 244, "1"],
  ["wire", 1, "i_system_wrapper/s..._PHASE_OUT_STROB", 247, "0"],
  ["bus", 1, "i_system_wrapper/s...AN_PHASE_OUT[15:0]", 246, "-1599"],
];

/* ---------- waveform ---------- */

const G = "#00c800";
const START = 3;
const END = 1077.5;
const sx = (v) => 29.5 + (v - 100) * 1.1343;
const rowY = (i) => 56 + i * 23 + 4.5;
const MonoText = styled.text`
  font: 11.670px "Liberation Mono", monospace;
  fill: ${(p) => p.$c || "#d6d6d6"};
  text-anchor: ${(p) => p.$a || "middle"};
`;

function Bus({ row, cuts, texts = [], thick, h = 4 }) {
  const t = rowY(row);
  const b = t + 17;
  const m = (t + b) / 2;
  const edges = [START, ...cuts, END];
  return (
    <g fill="#000" stroke={G} strokeWidth={thick ? 2 : 1}>
      {edges.slice(1).map((r, i) => {
        const l = edges[i];
        const k = Math.min(h, (r - l) / 2);
        const d = i === 0
          ? `M${l} ${t}H${Math.max(l, r - k)}L${r} ${m}L${Math.max(l, r - k)} ${b}H${l}`
          : `M${l} ${m}L${l + k} ${t}H${r - k}L${r} ${m}L${r - k} ${b}H${l + k}Z`;
        return <path key={i} d={d} />;
      })}
      {texts.map(([x, s]) => <MonoText key={x} x={x} y={t + 10} stroke="none">{s}</MonoText>)}
    </g>
  );
}
function Line({ row, pulses }) {
  const t = rowY(row);
  return (
    <g fill={G}>
      <rect x={START} y={t + 16.5} width={END - START} height="1" />
      {pulses.map(([x, w], i) => <rect key={i} x={Math.round(x - w / 2)} y={t - 0.5} width={w} height="17" />)}
    </g>
  );
}
const tenth = (skip) => {
  const out = [];
  for (let v = 79; v < 1024; v += 10) if (!skip.includes(v)) out.push(sx(v + 0.2));
  return out;
};
const strobes = (first, skip) => {
  const out = [];
  for (let k = 0; k < 95; k++) if (k !== skip) out.push([sx(first + k * 10.007), k % 7 === 2 ? 3 : 2]);
  return out;
};
const at = (...vs) => vs.map(([v, s]) => [sx(v), s]);
const loc = (x) => x - 2633;

function Scope() {
  const ticks = [];
  for (let v = 80; v <= 1100; v += 10) ticks.push(v);
  const majors = ticks.filter((v) => v % 100 === 0);
  return (
    <svg width="1168" height="848" shapeRendering="crispEdges">
      <rect width="1168" height="848" fill="#000" />
      {majors.map((v) => <rect key={v} x={Math.round(sx(v) - 0.5)} y="40" width="1" height="768" fill={v > 1024 ? "#ddd" : "#9a9a9a"} />)}
      {ticks.map((v) => {
        const h = v % 100 === 0 ? 16 : v % 50 === 0 ? 8 : 4;
        return <rect key={v} x={Math.round(sx(v) - 0.5)} y={56 - h} width="1" height={h} fill={v > 1024 ? "#fff" : "#cfcfcf"} />;
      })}
      <rect x="3" y="56" width="1075" height="1" fill="#cfcfcf" />
      <rect x="1078" y="56" width="88" height="1" fill="#fff" />
      <rect x="3" y="808" width="1075" height="1" fill="#a5a5a5" />
      <rect x="1078" y="808" width="88" height="1" fill="#fff" />
      {majors.filter((v) => v < 1100).map((v) => <MonoText key={v} $a="start" $c={v > 999 ? "#f4f4f4" : undefined} x={sx(v) + 1.500} y="43">{v.toLocaleString("en-US")}</MonoText>)}

      <Bus row={0} cuts={[]} texts={[[537.5, "0"]]} />
      <Line row={2} pulses={strobes(79.2)} />
      <Bus row={3} cuts={tenth([449, 499, 599, 739, 859])} texts={at([449, "6"], [499, "5"], [598.500, "9"], [738.500, "5"], [858.500, "1"])} />
      <Bus row={4} cuts={tenth([439, 679, 699, 759, 829, 899, 909])} texts={at([439, "0"], [678.500, "-3"], [698.500, "-7"], [758.500, "-6"], [828.500, "-6"], [904, "-6"])} />
      <Bus row={5} cuts={tenth([769, 819, 919])} texts={at([768.500, "6"], [818.500, "5"], [918.500, "9"])} />
      <Bus row={6} cuts={tenth([759, 999, 1019])} texts={at([758.500, "0"], [998.500, "-3"], [1016, "."])} />
      <Bus
        row={8}
        cuts={[2788.6, 2799.6, 2811, 2969.8, 2981, 2992.7, 3151.5, 3163, 3174.3, 3332.6, 3344, 3356, 3514.4, 3526, 3537.7, 3695.4, 3707].map(loc)}
        texts={[2709.4, 2889.4, 3071.5, 3252.3, 3434.4, 3615.4].map((x) => [loc(x), "0"])}
      />
      <Line row={9} pulses={strobes(81, 43)} />
      <Line row={10} pulses={[[541, 2], [904.700, 2]]} />
      <Bus row={11} cuts={[540.5, 904.700]} texts={[[268.700, "16"], [722, "39"], [990, "31"]]} />
      <Bus row={13} cuts={[542.5, 545.5, 906, 908]} texts={[[270.300, "0"], [724.500, "0"], [991.500, "0"]]} />
      <rect x="906" y={rowY(13)} width="2" height="17" fill={G} />
      <Bus row={14} cuts={[542.5, 545.5]} texts={[[270.300, "0"], [810, "0"]]} />
      <Line row={15} pulses={[[545, 1], [907, 2]]} />
      <Line row={16} pulses={[[568, 2], [930.800, 2]]} />
      <Bus row={17} thick cuts={[566.200, 930.500]} texts={[[283, "-1599"], [748, "-1524"], [1003, "2497"]]} />

      <rect x="490" y="18" width="12" height="18" fill="#d00000" />
      <rect x="495" y="18" width="2" height="790" fill="#c80000" />
      <MonoText x="495.500" y="29" $c="#000">T</MonoText>
      <rect x="542" y="1" width="2" height="807" fill="#d0cc00" />
      <rect x="542.500" y=".5" width="25" height="15" fill="#d0cc00" stroke="#c9c9a0" />
      <MonoText x="555" y="10" $c="#000">553</MonoText>
      <MonoText x="5" y="843" $a="start" $c="#f4f4f4">Updated at: 2024-Apr-08 14:48:59</MonoText>
    </svg>
  );
}

function Waveform() {
  return (
    <Wave>
      <PanelHeader $h={28} $pl={6} $pr={4}>
        <Fit w={119}>Waveform - hw_ila_1</Fit><Spacer /><HeadButtons list={["q", "min", "rest", "x"]} />
      </PanelHeader>
      <WaveTools>
        {waveTools.map((icon, i) => <ToolCell key={i} $w={35} $line="#d0d0d0">{icon}</ToolCell>)}
        <Spacer /><FaCog size={14} color={navy} />
      </WaveTools>
      <WaveBody>
        <SignalPane>
          <Status><Fit w={82}>ILA Status:  Idle</Fit></Status>
          <Columns>
            <Column $w={308}>
              <ColumnHead><Fit w={33}>Name</Fit></ColumnHead>
              <Rows>
                {signals.map(([kind, level, name, w], i) => (
                  <SignalRow key={i} $level={level}>
                    <Expander>
                      {kind === "bus" && <ChevronRight size={15} />}
                      {kind === "group" && <ChevronDown size={15} />}
                    </Expander>
                    <SignalLabel $on={i === 17}>
                      {kind === "bus" ? <BusIcon /> : kind === "wire" ? <WireIcon /> : <GroupIcon />}
                      <Fit w={w}>{name}</Fit>
                    </SignalLabel>
                  </SignalRow>
                ))}
              </Rows>
            </Column>
            <Column $w={92}>
              <ColumnHead><Fit w={32}>Value</Fit></ColumnHead>
              <Rows>{signals.map((s, i) => <ValueRow key={i} $on={i === 17}>{s[4]}</ValueRow>)}</Rows>
              <HScroll><ChevronLeft size={14} /><ChevronRight size={14} /></HScroll>
            </Column>
          </Columns>
        </SignalPane>
        <ScopePane>
          <ScopeRow>
            <Scope />
            <VScroll><ChevronUp size={14} /><ChevronDown size={14} /></VScroll>
          </ScopeRow>
          <HScroll><ChevronLeft size={14} /><Thumb /><ChevronRight size={14} /></HScroll>
        </ScopePane>
      </WaveBody>
    </Wave>
  );
}

function HardwareManager() {
  return (
    <Content>
      <ManagerHeader>
        <Fit w={369}><b>HARDWARE MANAGER</b> - localhost/xilinx_tcf/Digilent/210248B84E39</Fit>
        <Spacer /><HeadButtons list={["q", "x"]} />
      </ManagerHeader>
      <Workspace>
        <SideTabs>
          <SideTab $w={22} $h={155} $pb={5} $c="#777"><Fit vertical w={133}>Debug Probe Properties</Fit></SideTab>
          <SideTab $w={22} $h={76} $pb={5} $c="#777"><Fit vertical w={53}>Hardware</Fit></SideTab>
        </SideTabs>
        <Frame>
          <PanelHeader $h={29} $pl={7} $pr={5}>
            <Fit w={50}>hw_ila_1</Fit><Spacer /><HeadButtons list={["q", "rest", "out", "x"]} />
          </PanelHeader>
          <FrameBody>
            <SideTab $w={18} $h={199} $pb={44} $c="#111" $line="#bbb"><Fit vertical w={107}>Dashboard Options</Fit></SideTab>
            <Waveform />
          </FrameBody>
        </Frame>
      </Workspace>
      <BottomTabs>
        <BottomTab><Fit w={66}>Tcl Console</Fit></BottomTab>
        <BottomTab><Fit w={57}>Messages</Fit></BottomTab>
        <BottomTab><Fit w={83}>Serial I/O Links</Fit></BottomTab>
        <BottomTab $last><Fit w={88}>Serial I/O Scans</Fit></BottomTab>
      </BottomTabs>
    </Content>
  );
}

export default function App() {
  return (
    <>
      <Global />
      <Desktop>
        <Monitor $h={1080}>
          <Browser />
          <Taskbar tray />
        </Monitor>
        <Monitor $h={1200}>
          <IdeHeader />
          <IdeBody>
            <Navigator />
            <HardwareManager />
          </IdeBody>
          <StatusStrip />
          <Taskbar />
        </Monitor>
      </Desktop>
    </>
  );
}
